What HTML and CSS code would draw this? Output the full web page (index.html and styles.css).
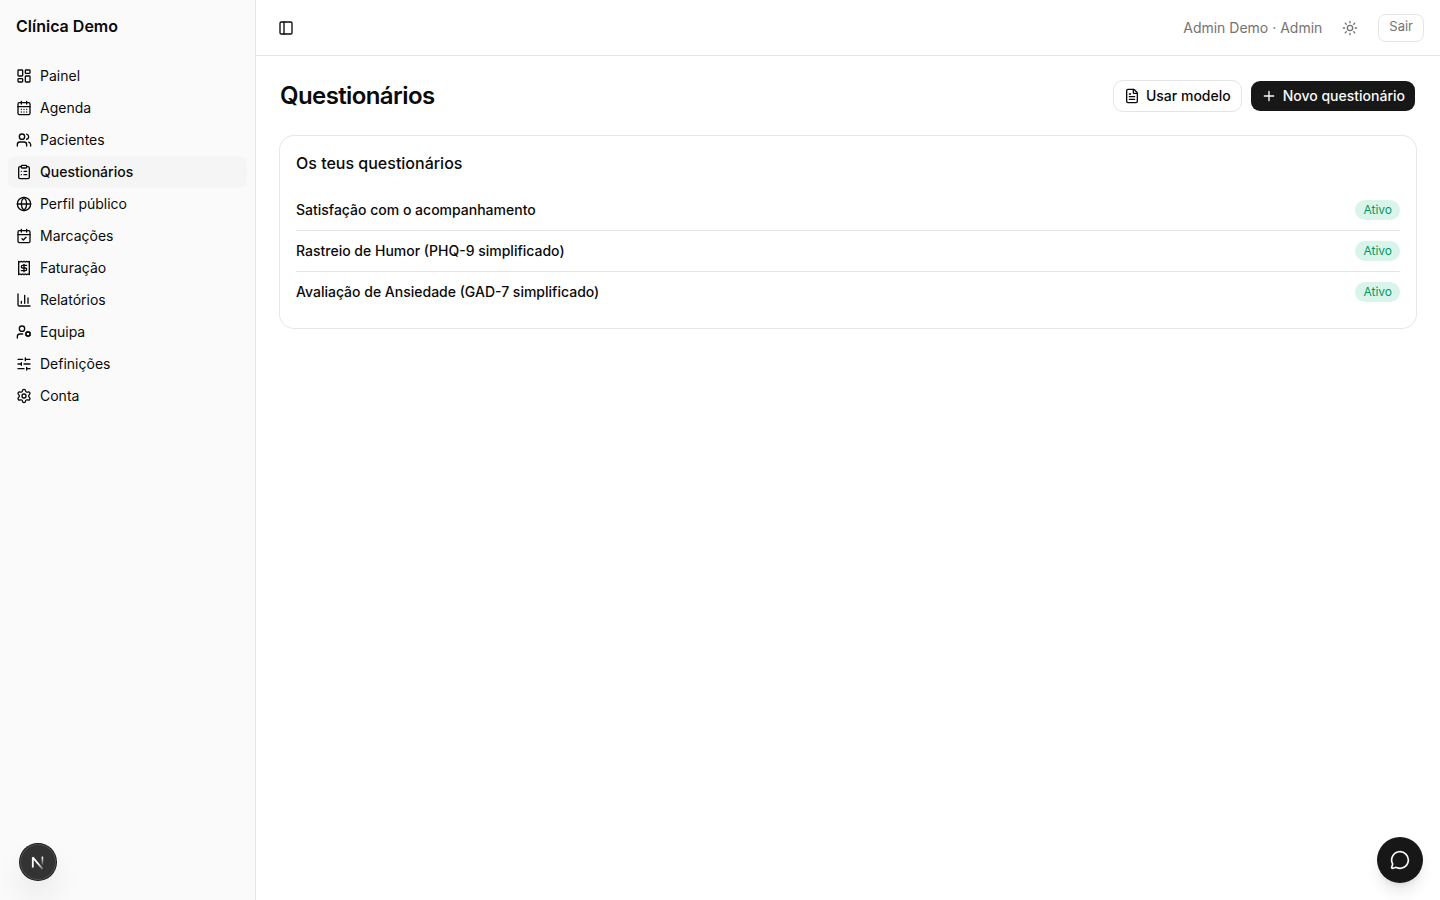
FILE: index.html
```html
<!DOCTYPE html>
<html lang="pt">
  <head>
    <meta charset="UTF-8" />
    <meta name="viewport" content="width=device-width, initial-scale=1.0" />
    <title>Questionários</title>
    <link rel="stylesheet" href="styles.css">
  </head>

  <body>
    <div class="layout">
      <aside class="sidebar">
        <div class="sidebar-header">Clínica Demo</div>
        <nav class="menu">
          <a href="#" class="menu-item">
            <svg class="icon" viewBox="0 0 24 24"><rect width="7" height="9" x="3" y="3" rx="1" /><rect width="7" height="5" x="14" y="3" rx="1" /><rect width="7" height="9" x="14" y="12" rx="1" /><rect width="7" height="5" x="3" y="16" rx="1" /></svg>
            <span>Painel</span>
          </a>
          <a href="#" class="menu-item">
            <svg class="icon" viewBox="0 0 24 24"><path d="M8 2v4M16 2v4" /><rect width="18" height="18" x="3" y="4" rx="2" /><path d="M3 10h18M8 14h.01M12 14h.01M16 14h.01M8 18h.01M12 18h.01M16 18h.01" /></svg>
            <span>Agenda</span>
          </a>
          <a href="#" class="menu-item">
            <svg class="icon" viewBox="0 0 24 24"><path d="M16 21v-2a4 4 0 0 0-4-4H6a4 4 0 0 0-4 4v2" /><path d="M16 3.128a4 4 0 0 1 0 7.744" /><path d="M22 21v-2a4 4 0 0 0-3-3.87" /><circle cx="9" cy="7" r="4" /></svg>
            <span>Pacientes</span>
          </a>
          <a href="#" class="menu-item active">
            <svg class="icon" viewBox="0 0 24 24"><rect width="8" height="4" x="8" y="2" rx="1" /><path d="M16 4h2a2 2 0 0 1 2 2v14a2 2 0 0 1-2 2H6a2 2 0 0 1-2-2V6a2 2 0 0 1 2-2h2" /><path d="M12 11h4M12 16h4M8 11h.01M8 16h.01" /></svg>
            <span>Questionários</span>
          </a>
          <a href="#" class="menu-item">
            <svg class="icon" viewBox="0 0 24 24"><circle cx="12" cy="12" r="10" /><path d="M12 2a14.5 14.5 0 0 0 0 20 14.5 14.5 0 0 0 0-20" /><path d="M2 12h20" /></svg>
            <span>Perfil público</span>
          </a>
          <a href="#" class="menu-item">
            <svg class="icon" viewBox="0 0 24 24"><path d="M8 2v4M16 2v4" /><rect width="18" height="18" x="3" y="4" rx="2" /><path d="M3 10h18" /><path d="m9 16 2 2 4-4" /></svg>
            <span>Marcações</span>
          </a>
          <a href="#" class="menu-item">
            <svg class="icon" viewBox="0 0 24 24"><path d="M4 2v20l2-1 2 1 2-1 2 1 2-1 2 1 2-1 2 1V2l-2 1-2-1-2 1-2-1-2 1-2-1-2 1Z" /><path d="M16 8h-6a2 2 0 1 0 0 4h4a2 2 0 1 1 0 4H8" /><path d="M12 17.5v-11" /></svg>
            <span>Faturação</span>
          </a>
          <a href="#" class="menu-item">
            <svg class="icon" viewBox="0 0 24 24"><path d="M3 3v16a2 2 0 0 0 2 2h16" /><path d="M18 17V9M13 17V5M8 17v-3" /></svg>
            <span>Relatórios</span>
          </a>
          <a href="#" class="menu-item">
            <svg class="icon" viewBox="0 0 24 24"><path d="M10 15H6a4 4 0 0 0-4 4v2" /><path d="m14.305 16.53.923-.382M15.228 13.852l-.923-.383M16.852 12.228l-.383-.923M16.852 17.772l-.383.924M19.148 12.228l.383-.923M19.53 18.696l-.382-.924M20.772 13.852l.924-.383M20.772 16.148l.924.383" /><circle cx="18" cy="15" r="3" /><circle cx="9" cy="7" r="4" /></svg>
            <span>Equipa</span>
          </a>
          <a href="#" class="menu-item">
            <svg class="icon" viewBox="0 0 24 24"><path d="M10 5H3M12 19H3M14 3v4M16 17v4M21 12h-9M21 19h-5M21 5h-7M8 10v4M8 12H3" /></svg>
            <span>Definições</span>
          </a>
          <a href="#" class="menu-item">
            <svg class="icon" viewBox="0 0 24 24"><path d="M9.671 4.136a2.34 2.34 0 0 1 4.659 0 2.34 2.34 0 0 0 3.319 1.915 2.34 2.34 0 0 1 2.33 4.033 2.34 2.34 0 0 0 0 3.831 2.34 2.34 0 0 1-2.33 4.033 2.34 2.34 0 0 0-3.319 1.915 2.34 2.34 0 0 1-4.659 0 2.34 2.34 0 0 0-3.32-1.915 2.34 2.34 0 0 1-2.33-4.033 2.34 2.34 0 0 0 0-3.831A2.34 2.34 0 0 1 6.35 6.051a2.34 2.34 0 0 0 3.319-1.915" /><circle cx="12" cy="12" r="3" /></svg>
            <span>Conta</span>
          </a>
        </nav>
      </aside>

      <div class="content">
        <header class="topbar">
          <button type="button" class="icon-button" aria-label="Alternar menu">
            <svg class="icon" viewBox="0 0 24 24"><rect width="18" height="18" x="3" y="3" rx="2" /><path d="M9 3v18" /></svg>
          </button>
          <div class="topbar-right">
            <span>Admin Demo · Admin</span>
            <button type="button" class="icon-button theme" aria-label="Mudar tema">
              <svg class="icon" viewBox="0 0 24 24"><circle cx="12" cy="12" r="4" /><path d="M12 2v2M12 20v2M4.93 4.93l1.41 1.41M17.66 17.66l1.41 1.41M2 12h2M20 12h2M6.34 17.66l-1.41 1.41M19.07 4.93l-1.41 1.41" /></svg>
            </button>
            <button type="button" class="logout">Sair</button>
          </div>
        </header>

        <main class="page">
          <div class="page-header">
            <h1>Questionários</h1>
            <div class="actions">
              <button type="button" class="button outline">
                <svg class="icon" viewBox="0 0 24 24"><path d="M6 22a2 2 0 0 1-2-2V4a2 2 0 0 1 2-2h8a2.4 2.4 0 0 1 1.704.706l3.588 3.588A2.4 2.4 0 0 1 20 8v12a2 2 0 0 1-2 2z" /><path d="M14 2v5a1 1 0 0 0 1 1h5M10 9H8M16 13H8M16 17H8" /></svg>
                Usar modelo
              </button>
              <button type="button" class="button primary">
                <svg class="icon" viewBox="0 0 24 24"><path d="M5 12h14M12 5v14" /></svg>
                Novo questionário
              </button>
            </div>
          </div>

          <section class="card">
            <h2>Os teus questionários</h2>
            <ul class="list">
              <li>
                <a href="#">Satisfação com o acompanhamento</a>
                <span class="badge">Ativo</span>
              </li>
              <li>
                <a href="#">Rastreio de Humor (PHQ-9 simplificado)</a>
                <span class="badge">Ativo</span>
              </li>
              <li>
                <a href="#">Avaliação de Ansiedade (GAD-7 simplificado)</a>
                <span class="badge">Ativo</span>
              </li>
            </ul>
          </section>
        </main>
      </div>
    </div>

    <button type="button" class="dev-button" aria-label="Ferramentas">
      <svg viewBox="0 0 40 40" width="40" height="40" fill="none">
        <defs>
          <linearGradient id="fade-a" x1="21" y1="21" x2="26" y2="27" gradientUnits="userSpaceOnUse">
            <stop stop-color="#fff" />
            <stop offset="1" stop-color="#fff" stop-opacity="0.2" />
          </linearGradient>
          <linearGradient id="fade-b" x1="0" y1="15" x2="0" y2="24" gradientUnits="userSpaceOnUse">
            <stop stop-color="#fff" />
            <stop offset="1" stop-color="#fff" stop-opacity="0" />
          </linearGradient>
        </defs>
        <path d="M14.8 25.6V15.4L24.6 27" stroke="url(#fade-a)" stroke-width="1.8" stroke-linejoin="bevel" />
        <rect x="23.6" y="14.6" width="1.6" height="9" fill="url(#fade-b)" />
      </svg>
    </button>

    <button type="button" class="chat-button" aria-label="Abrir chat">
      <svg class="icon" viewBox="0 0 24 24"><path d="M2.992 16.342a2 2 0 0 1 .094 1.167l-1.065 3.29a1 1 0 0 0 1.236 1.168l3.413-.998a2 2 0 0 1 1.099.092 10 10 0 1 0-4.777-4.719" /></svg>
    </button>
  </body>
</html>
```
FILE: styles.css
```css
* {
  box-sizing: border-box;
}

body {
  margin: 0;
  font-family: Inter, "Liberation Sans", sans-serif;
  font-size: 14px;
  line-height: 20px;
  color: #0a0a0a;
  background: #fff;
}

h1,
h2,
ul {
  margin: 0;
  padding: 0;
}

a {
  color: inherit;
  text-decoration: none;
}

button {
  font: inherit;
  color: inherit;
  cursor: pointer;
}

.icon {
  width: 16px;
  height: 16px;
  flex-shrink: 0;
  fill: none;
  stroke: currentColor;
  stroke-width: 2;
  stroke-linecap: round;
  stroke-linejoin: round;
}

.layout {
  display: flex;
  min-height: 100vh;
}

/* sidebar */
.sidebar {
  width: 256px;
  flex-shrink: 0;
  background: #fafafa;
  border-right: 1px solid #e5e5e5;
}

.sidebar-header {
  padding: 14px 16px;
  font-size: 16px;
  line-height: 24px;
  font-weight: 600;
}

.menu {
  display: flex;
  flex-direction: column;
  padding: 8px;
}

.menu-item {
  display: flex;
  align-items: center;
  gap: 8px;
  height: 32px;
  padding: 0 8px;
  border-radius: 8px;
}

.menu-item:hover,
.menu-item.active {
  background: #f5f5f5;
}

.menu-item.active {
  font-weight: 500;
}

/* top bar */
.content {
  flex: 1;
  min-width: 0;
}

.topbar {
  display: flex;
  align-items: center;
  justify-content: space-between;
  height: 56px;
  padding: 0 16px;
  border-bottom: 1px solid #e5e5e5;
}

.topbar-right {
  display: flex;
  align-items: center;
  gap: 12px;
  color: #737373;
}

.icon-button {
  display: flex;
  align-items: center;
  justify-content: center;
  width: 28px;
  height: 28px;
  padding: 0;
  border: none;
  border-radius: 8px;
  background: none;
}

.icon-button.theme {
  width: 32px;
  height: 32px;
}

.logout {
  height: 28px;
  padding: 0 10px 3px;
  font-size: 13px;
  border: 1px solid #e5e5e5;
  border-radius: 8px;
  background: #fff;
}

/* page */
.page {
  display: flex;
  flex-direction: column;
  gap: 24px;
  padding: 24px;
}

.page-header {
  display: flex;
  align-items: center;
  justify-content: space-between;
}

h1 {
  font-size: 24px;
  line-height: 32px;
  font-weight: 600;
  letter-spacing: -0.025em;
}

.actions {
  display: flex;
  gap: 8px;
}

.button {
  display: flex;
  align-items: center;
  gap: 6px;
  height: 32px;
  padding: 0 10px;
  font-weight: 500;
  border: 1px solid transparent;
  border-radius: 10px;
  background-clip: padding-box;
}

.button.outline {
  border-color: #e5e5e5;
  background-color: #fff;
}

.button.primary {
  color: #fafafa;
  background-color: #171717;
}

.card {
  display: flex;
  flex-direction: column;
  gap: 16px;
  padding: 16px;
  border-radius: 14px;
  box-shadow: 0 0 0 1px #e7e7e7;
}

h2 {
  font-size: 16px;
  line-height: 22px;
  font-weight: 500;
}

.list {
  list-style: none;
}

.list li {
  display: flex;
  align-items: center;
  justify-content: space-between;
  padding: 10px 0;
  font-weight: 500;
}

.list li + li {
  border-top: 1px solid #e5e5e5;
}

.badge {
  height: 20px;
  padding: 0 8px;
  font-size: 12px;
  font-weight: 400;
  color: #009966;
  background: #d9f5eb;
  border-radius: 10px;
}

/* floating buttons */
.dev-button {
  position: fixed;
  left: 20px;
  bottom: 20px;
  display: flex;
  align-items: center;
  justify-content: center;
  width: 36px;
  height: 36px;
  padding: 0;
  border: none;
  border-radius: 50%;
  background: #333;
  box-shadow: 0 0 0 1px #171717, inset 0 0 0 1px #4d4d4d,
    0 16px 32px -8px rgba(0, 0, 0, 0.24);
}

.dev-button svg {
  flex-shrink: 0;
}

.chat-button {
  position: fixed;
  right: 16px;
  bottom: 16px;
  display: flex;
  align-items: center;
  justify-content: center;
  width: 48px;
  height: 48px;
  padding: 0;
  color: #fafafa;
  border: 1px solid transparent;
  border-radius: 50%;
  background: #171717;
  background-clip: padding-box;
  box-shadow: 0 10px 15px -3px rgba(0, 0, 0, 0.1),
    0 4px 6px -4px rgba(0, 0, 0, 0.1);
}

.chat-button .icon {
  width: 20px;
  height: 20px;
}
```
